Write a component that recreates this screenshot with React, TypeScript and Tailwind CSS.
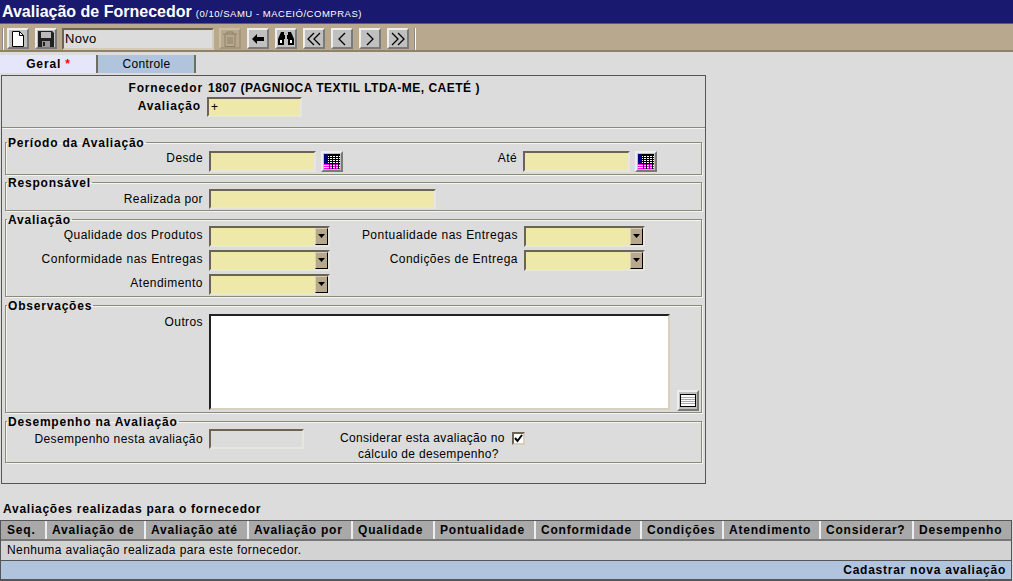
import type { ReactNode } from 'react';

const inputCls =
  'block border-2 border-t-[#6b6353] border-l-[#6b6353] border-r-[#e6e6dc] border-b-[#e6e6dc] bg-[#eee8aa] px-0.5 text-[12px] text-black outline-none';

function Section({ title, className, children }: { title: string; className: string; children: ReactNode }) {
  return (
    <fieldset className={`mx-[3px] border border-[#8b8b78] shadow-[inset_1px_1px_0_#f4f4f4,1px_1px_0_#f4f4f4] ${className}`}>
      <legend className="ml-[1px] -mb-[1px] translate-y-[1px] px-[1px] text-[12px] leading-[14px] font-bold tracking-[0.8px] text-black">{title}</legend>
      {children}
    </fieldset>
  );
}

function ToolBtn({ children, disabled }: { children: ReactNode; disabled?: boolean }) {
  return (
    <button
      className={`flex h-[21px] w-[22px] items-center justify-center border-2 ${
        disabled
          ? 'border-t-[#c9bda4] border-l-[#c9bda4] border-r-[#a4977c] border-b-[#a4977c] bg-[#b8a98e]'
          : 'border-t-[#eeeeee] border-l-[#eeeeee] border-r-[#7a7a7a] border-b-[#7a7a7a] bg-[#c0c0c0]'
      }`}
    >
      {children}
    </button>
  );
}

function Label({ children, className }: { children: ReactNode; className: string }) {
  return <span className={`shrink-0 text-right ${className}`}>{children}</span>;
}

function Combo() {
  return (
    <div className="flex h-[21px] w-[121px] self-start border-2 border-t-[#6b6353] border-l-[#6b6353] border-r-[#e6e6dc] border-b-[#e6e6dc] bg-[#eee8aa]">
      <div className="ml-auto flex w-[13px] items-center justify-center border border-t-[#d8d0bc] border-l-[#d8d0bc] border-r-black border-b-black bg-[#b8a98e]">
        <svg width="7" height="5" viewBox="0 0 7 5"><path d="M0 0h7L3.5 4z" fill="#000" /></svg>
      </div>
    </div>
  );
}

function CalBtn() {
  return (
    <button className="flex h-[21px] w-[22px] items-center justify-center border-2 border-t-[#eeeeee] border-l-[#eeeeee] border-r-[#7a7a7a] border-b-[#7a7a7a] bg-[#c0c0c0]">
      <svg width="16" height="15" viewBox="0 0 16 15">
        <rect width="16" height="15" fill="#000" />
        <rect width="4" height="15" fill="#000080" />
        <rect y="10" width="16" height="5" fill="#ff00ff" />
        <path d="M4 2.5h12M4 4.5h12M4 6.5h12M4 8.5h12M0 11.5h16M0 13.5h16" stroke="#fff" strokeWidth="1" />
        <path d="M5.5 0v15M8.5 0v15M11.5 0v15M14.5 0v15" stroke="#000" strokeWidth="1" />
      </svg>
    </button>
  );
}

const columns = [
  ['Seq.', 'w-[46px] first:pl-[6px]'],
  ['Avaliação de', 'w-[99px]'],
  ['Avaliação até', 'w-[103px]'],
  ['Avaliação por', 'w-[104px]'],
  ['Qualidade', 'w-[82px]'],
  ['Pontualidade', 'w-[101px]'],
  ['Conformidade', 'w-[106px]'],
  ['Condições', 'w-[82px]'],
  ['Atendimento', 'w-[97px]'],
  ['Considerar?', 'w-[93px]'],
  ['Desempenho', 'flex-1'],
];

export default function App() {
  return (
    <div className="h-[581px] w-[1013px] overflow-hidden bg-[#dcdcdc] font-['Liberation_Sans',Arial,sans-serif] text-[12px] tracking-[0.4px] text-black">
      <div className="flex h-[24px] items-center gap-[4px] border-b border-[#5a5a7a] bg-[#191970] pt-[1px] pl-[2px] text-white">
        <span className="text-[16px] leading-none font-bold tracking-[0px]">Avaliação de Fornecedor</span>
        <span className="mt-[3px] text-[9.5px] leading-none tracking-[0.53px]">(0/10/SAMU - MACEIÓ/COMPRAS)</span>
      </div>

      <div className="flex h-[28px] items-center border-b-2 border-[#8f8268] bg-[#b8a98e] pt-[3px] pl-[2px]">
        <div className="mr-[3px] h-[22px] w-[2px] border-r border-white bg-[#8a8a8a]" />
        <ToolBtn>
          <svg width="14" height="16" viewBox="0 0 14 16"><path d="M1.5.5h7l4 4v11h-11z" fill="#fff" stroke="#000" /><path d="M8.5.5v4h4" fill="none" stroke="#000" /></svg>
        </ToolBtn>
        <div className="w-[6px]" />
        <ToolBtn>
          <svg width="16" height="16" viewBox="0 0 16 16"><path d="M0 0h14l2 2v14H0z" fill="#222" /><rect x="3" y="1" width="10" height="6" fill="#bbb" /><rect x="4" y="10" width="8" height="6" fill="#999" /><rect x="5" y="11" width="2" height="4" fill="#222" /></svg>
        </ToolBtn>
        <input
          readOnly
          value="Novo"
          className="ml-[5px] h-[22px] w-[152px] border-2 border-t-[#6b6353] border-l-[#6b6353] border-r-[#d4ccb8] border-b-[#d4ccb8] bg-[#dcdcdc] px-[1px] text-[13px] tracking-[0.3px] outline-none"
        />
        <div className="w-[5px]" />
        <ToolBtn disabled>
          <svg width="14" height="16" viewBox="0 0 14 16" fill="none" stroke="#8c8068"><path d="M0 3h14M4 3V1h6v2" /><path d="M2 3v12.5h10V3M5 6v7M7 6v7M9 6v7" /></svg>
        </ToolBtn>
        <div className="ml-[6px] flex gap-[6px]">
          <ToolBtn>
            <svg width="12" height="10" viewBox="0 0 12 10"><path d="M0 5l5-5v3h7v4H5v3z" fill="#000" /></svg>
          </ToolBtn>
          <ToolBtn>
            <svg width="16" height="14" viewBox="0 0 16 14" fill="#000"><path d="M3 0h3v3h1v4H6v6H0V7zM13 0h-3v3H9v4h1v6h6V7z" /><rect x="2" y="8" width="2" height="3" fill="#fff" /><rect x="12" y="8" width="2" height="3" fill="#fff" /></svg>
          </ToolBtn>
          <ToolBtn>
            <svg width="14" height="14" viewBox="0 0 14 14" fill="none" stroke="#000" strokeWidth="1.3"><path d="M7 1L1 7l6 6M13 1L7 7l6 6" /></svg>
          </ToolBtn>
          <ToolBtn>
            <svg width="8" height="14" viewBox="0 0 8 14" fill="none" stroke="#000" strokeWidth="1.3"><path d="M7 1L1 7l6 6" /></svg>
          </ToolBtn>
          <ToolBtn>
            <svg width="8" height="14" viewBox="0 0 8 14" fill="none" stroke="#000" strokeWidth="1.3"><path d="M1 1l6 6-6 6" /></svg>
          </ToolBtn>
          <ToolBtn>
            <svg width="14" height="14" viewBox="0 0 14 14" fill="none" stroke="#000" strokeWidth="1.3"><path d="M1 1l6 6-6 6M7 1l6 6-6 6" /></svg>
          </ToolBtn>
        </div>
        <div className="ml-[5px] h-[22px] w-[2px] border-r border-white bg-[#8a8a8a]" />
      </div>

      <div className="mt-[3px] flex h-[18px] leading-[18px]">
        <div className="w-[98px] border-r-2 border-[#6e6e5e] bg-[#e6e6fa] pl-[1px] text-center font-bold tracking-[0.85px]">
          Geral <span className="text-[#ff0000]">*</span>
        </div>
        <div className="w-[98px] border-r-2 border-[#6e6e5e] bg-[#b0c4de] pl-[1px] text-center tracking-[0.3px]">Controle</div>
      </div>

      <div className="mt-[2px] ml-[1px] h-[409px] w-[705px] border border-[#555]">
        <div className="flex h-[52px] border-b border-[#8b8b78] shadow-[0_1px_0_#f4f4f4]">
          <div className="w-[205px] shrink-0 pt-[5px] pr-[4px] text-right font-bold tracking-[0.85px]">
            <div className="leading-[14px]">Fornecedor</div>
            <div className="mt-[4px] pr-[2px] leading-[14px]">Avaliação</div>
          </div>
          <div className="pt-[5px]">
            <div className="pl-[1px] leading-[14px] font-bold tracking-[0.5px]">1807 (PAGNIOCA TEXTIL LTDA-ME, CAETÉ )</div>
            <input readOnly value="+" className={`${inputCls} mt-[2px] h-[20px] w-[95px]`} />
          </div>
        </div>

        <Section title="Período da Avaliação" className="mt-[7px] h-[40px]">
          <div className="flex items-start pt-[3px]">
            <Label className="-mt-[2px] w-[203px] pr-[6px]">Desde</Label>
            <input readOnly className={`${inputCls} h-[21px] w-[107px]`} />
            <div className="ml-[5px]"><CalBtn /></div>
            <Label className="-mt-[2px] w-[180px] pr-[6px]">Até</Label>
            <input readOnly className={`${inputCls} h-[21px] w-[107px]`} />
            <div className="ml-[5px]"><CalBtn /></div>
          </div>
        </Section>

        <Section title="Responsável" className="h-[36px]">
          <div className="flex items-center pt-[1px]">
            <Label className="w-[203px] pr-[6px]">Realizada por</Label>
            <input readOnly className={`${inputCls} h-[20px] w-[227px]`} />
          </div>
        </Section>

        <Section title="Avaliação" className="mt-[1px] h-[85px]">
          <div className="grid grid-cols-[203px_120px_195px_120px] grid-rows-[24px_24px_24px] items-center pt-[1px] tracking-[0.48px]">
            <Label className="mb-[6px] pr-[6px]">Qualidade dos Produtos</Label>
            <Combo />
            <Label className="mb-[6px] pr-[6px]">Pontualidade nas Entregas</Label>
            <Combo />
            <Label className="mb-[6px] pr-[6px]">Conformidade nas Entregas</Label>
            <Combo />
            <Label className="mb-[6px] pr-[6px]">Condições de Entrega</Label>
            <Combo />
            <Label className="mb-[6px] pr-[6px]">Atendimento</Label>
            <Combo />
          </div>
        </Section>

        <Section title="Observações" className="mt-[1px] h-[115px]">
          <div className="flex pt-[3px]">
            <Label className="-mt-[1px] w-[203px] pr-[6px]">Outros</Label>
            <div className="h-[96px] w-[461px] border-2 border-t-[#222] border-l-[#222] border-r-[#d8d0bc] border-b-[#d8d0bc] bg-white" />
            <button className="mt-[76px] ml-[7px] flex h-[21px] w-[22px] items-center justify-center border-2 border-t-[#eeeeee] border-l-[#eeeeee] border-r-[#7a7a7a] border-b-[#7a7a7a] bg-[#c0c0c0]">
              <svg width="16" height="13" viewBox="0 0 16 13">
                <rect x="0.5" y="0.5" width="15" height="12" fill="#fff" stroke="#000" />
                <path d="M1 3.5h14M1 5.5h14M1 7.5h14M1 9.5h14" stroke="#aaa" />
              </svg>
            </button>
          </div>
        </Section>

        <Section title="Desempenho na Avaliação" className="mt-[1px] h-[49px]">
          <div className="flex pt-[2px]">
            <Label className="w-[203px] pt-[1px] pr-[6px]">Desempenho nesta avaliação</Label>
            <div className="h-[20px] w-[95px] border-2 border-t-[#6b6353] border-l-[#6b6353] border-r-[#e6e6dc] border-b-[#e6e6dc] bg-[#dcdcdc]" />
            <div className="ml-[36px] flex flex-col items-start pt-[1px] leading-[16px] tracking-[0.33px]">
              <div className="flex items-center gap-[7px]">
                <span>Considerar esta avaliação no</span>
                <span className="flex h-[13px] w-[13px] items-center justify-center border-2 border-t-[#6b6353] border-l-[#6b6353] border-r-[#d8d0bc] border-b-[#d8d0bc] bg-white">
                  <svg width="9" height="9" viewBox="0 0 9 9"><path d="M1 4l2.5 3L8 1" fill="none" stroke="#000" strokeWidth="2" /></svg>
                </span>
              </div>
              <span className="ml-[18px]">cálculo de desempenho?</span>
            </div>
          </div>
        </Section>
      </div>

      <div className="mt-[18px] pl-[3px] leading-[14px] font-bold tracking-[0.75px]">Avaliações realizadas para o fornecedor</div>

      <div className="mt-[4px] mr-[1px] border-x border-[#555]">
        <div className="flex h-[21px] border-t border-b-2 border-[#555] border-b-[#777] bg-[#a9a9a9] font-bold tracking-[0.8px]">
          {columns.map(([name, w]) => (
            <div key={name} className={`${w} border-r-2 border-r-[#eeeeee] pl-[5px] leading-[19px] last:border-r-0`}>
              {name}
            </div>
          ))}
        </div>
        <div className="h-[20px] border-b border-[#555] bg-[#d3d3d3] pl-[6px] leading-[19px]">Nenhuma avaliação realizada para este fornecedor.</div>
        <div className="h-[20px] border-b-2 border-[#555] bg-[#b0c4de] pr-[5px] text-right leading-[19px] font-bold tracking-[0.75px]">Cadastrar nova avaliação</div>
      </div>
    </div>
  );
}
